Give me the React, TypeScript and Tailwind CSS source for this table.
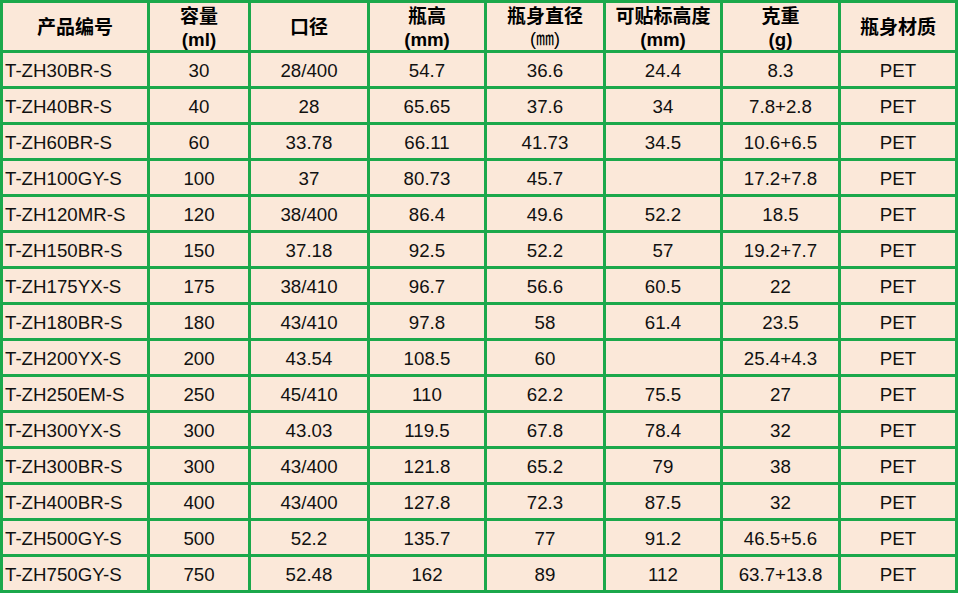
const headers: { cn: string; unit?: string; unitNormal?: boolean }[] = [
  { cn: "产品编号" },
  { cn: "容量", unit: "(ml)" },
  { cn: "口径" },
  { cn: "瓶高", unit: "(mm)" },
  { cn: "瓶身直径", unit: "(㎜)", unitNormal: true },
  { cn: "可贴标高度", unit: "(mm)" },
  { cn: "克重", unit: "(g)" },
  { cn: "瓶身材质" },
];

const rows: string[][] = [
  ["T-ZH30BR-S", "30", "28/400", "54.7", "36.6", "24.4", "8.3", "PET"],
  ["T-ZH40BR-S", "40", "28", "65.65", "37.6", "34", "7.8+2.8", "PET"],
  ["T-ZH60BR-S", "60", "33.78", "66.11", "41.73", "34.5", "10.6+6.5", "PET"],
  ["T-ZH100GY-S", "100", "37", "80.73", "45.7", "", "17.2+7.8", "PET"],
  ["T-ZH120MR-S", "120", "38/400", "86.4", "49.6", "52.2", "18.5", "PET"],
  ["T-ZH150BR-S", "150", "37.18", "92.5", "52.2", "57", "19.2+7.7", "PET"],
  ["T-ZH175YX-S", "175", "38/410", "96.7", "56.6", "60.5", "22", "PET"],
  ["T-ZH180BR-S", "180", "43/410", "97.8", "58", "61.4", "23.5", "PET"],
  ["T-ZH200YX-S", "200", "43.54", "108.5", "60", "", "25.4+4.3", "PET"],
  ["T-ZH250EM-S", "250", "45/410", "110", "62.2", "75.5", "27", "PET"],
  ["T-ZH300YX-S", "300", "43.03", "119.5", "67.8", "78.4", "32", "PET"],
  ["T-ZH300BR-S", "300", "43/400", "121.8", "65.2", "79", "38", "PET"],
  ["T-ZH400BR-S", "400", "43/400", "127.8", "72.3", "87.5", "32", "PET"],
  ["T-ZH500GY-S", "500", "52.2", "135.7", "77", "91.2", "46.5+5.6", "PET"],
  ["T-ZH750GY-S", "750", "52.48", "162", "89", "112", "63.7+13.8", "PET"],
];

export default function App() {
  return (
    <div
      className="w-[958px] h-[593px] bg-[#1ba84b] p-[3px] text-[#111] overflow-hidden"
      style={{ fontFamily: '"Liberation Sans", Arial, "Noto Sans CJK SC", sans-serif' }}
    >
      <div className="grid grid-cols-[144px_98px_116px_114px_116px_114px_115px_114px] grid-rows-[47px_repeat(15,33px)] gap-[3px]">
        {headers.map((h) => (
          <div
            key={h.cn}
            className="bg-[#fbe8d9] flex flex-col items-center justify-center pt-[2px] font-bold leading-[23px] text-black"
          >
            <span className="text-[19px]">{h.cn}</span>
            {h.unit && (
              <span className={h.unitNormal ? "font-normal text-[18px] text-black" : "text-[18.7px]"}>{h.unit}</span>
            )}
          </div>
        ))}
        {rows.map((r) =>
          r.map((c, i) => (
            <div
              key={r[0] + i}
              className={`bg-[#fbe8d9] flex items-center pt-[4px] text-[18.7px] ${
                i === 0 ? "justify-start pl-[2px]" : "justify-center"
              }`}
            >
              {c}
            </div>
          ))
        )}
      </div>
    </div>
  );
}
